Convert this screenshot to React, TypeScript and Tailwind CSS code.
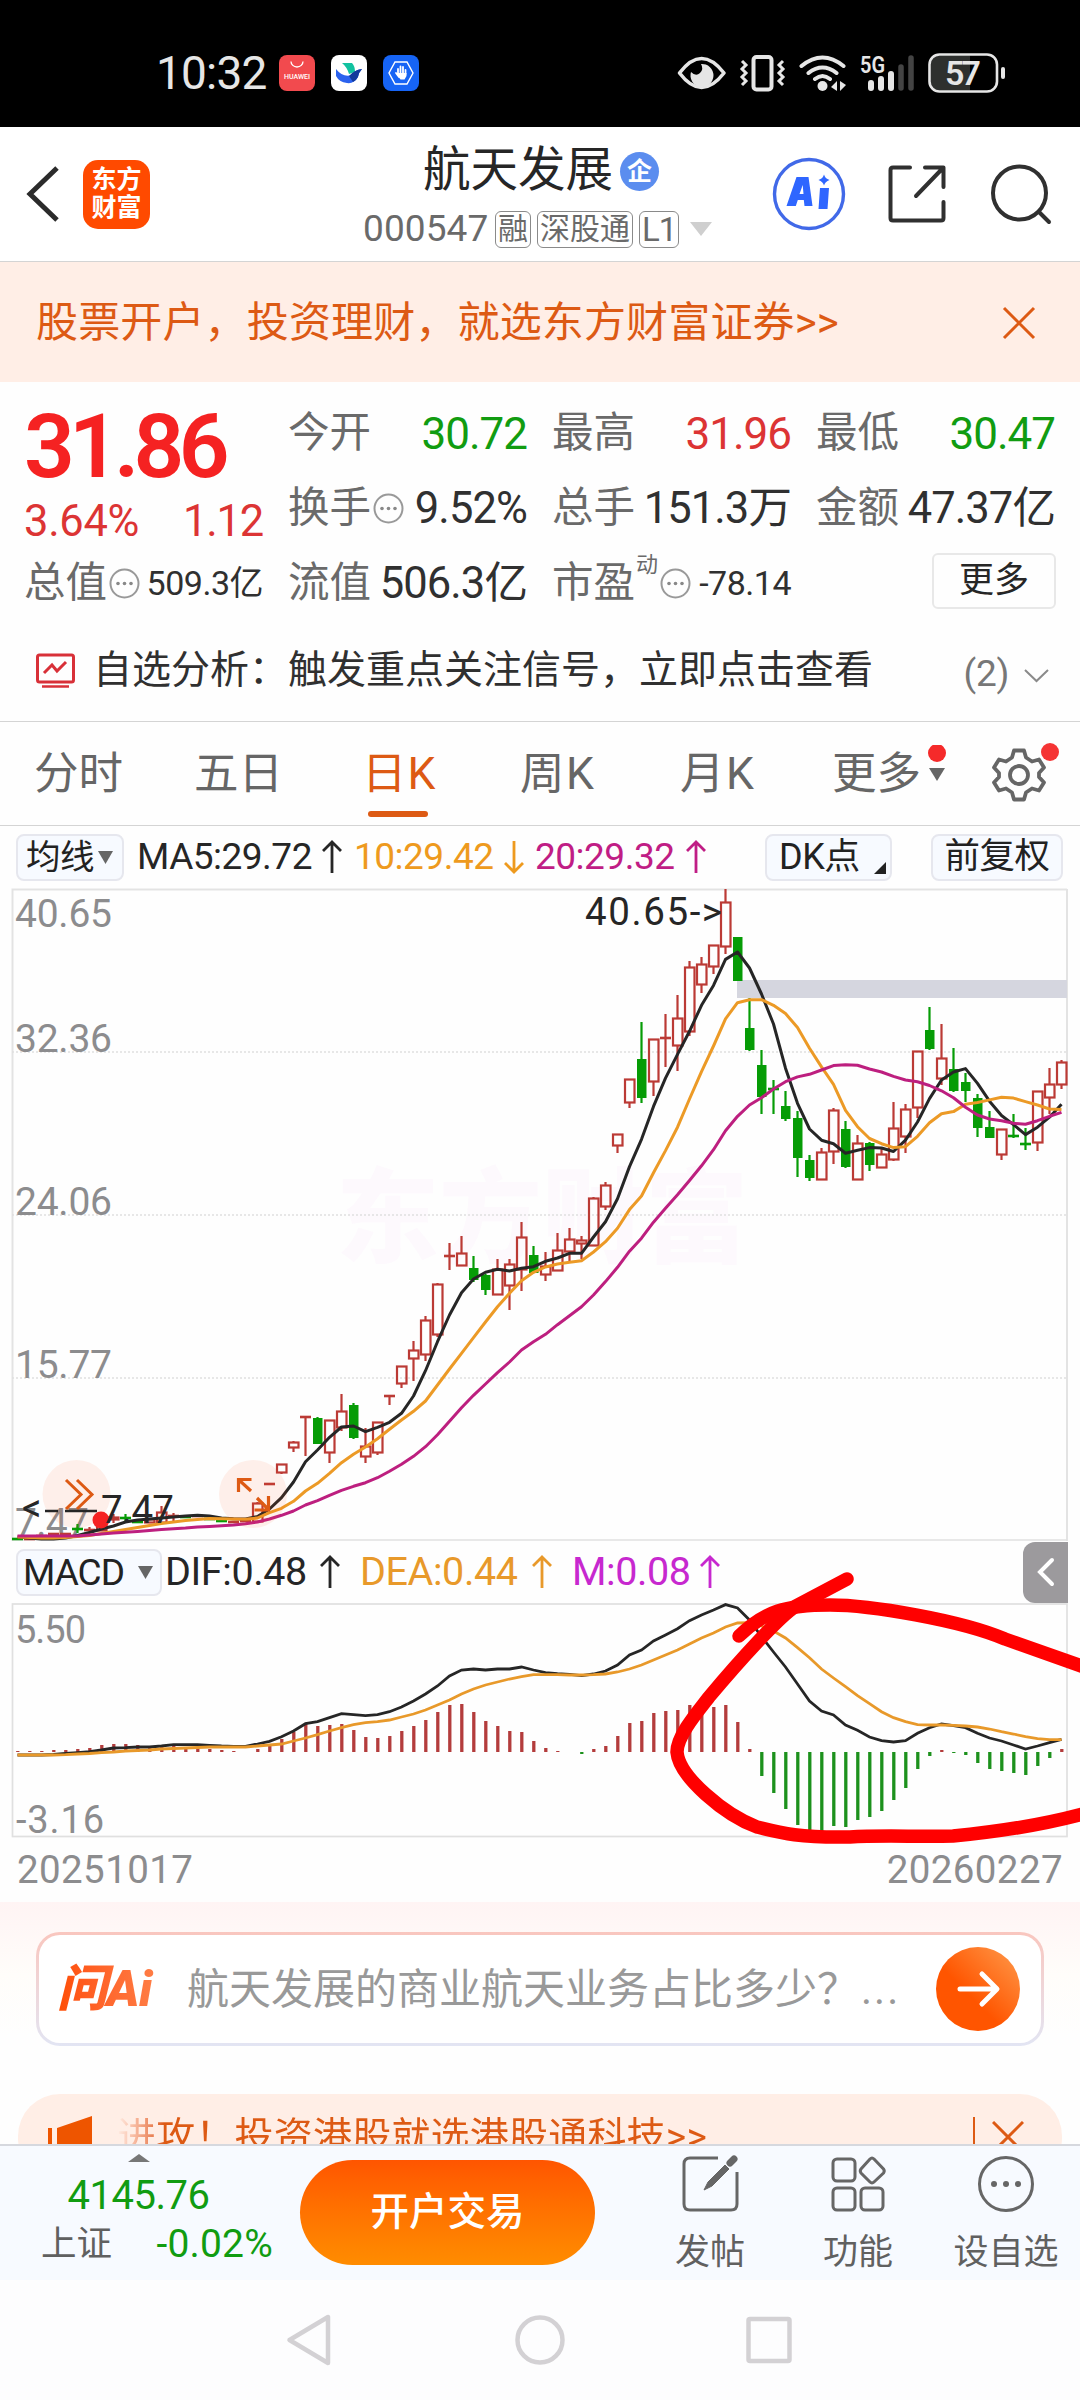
import type { ReactNode } from 'react'

type Candle = [high: number, top: number, bottom: number, low: number, up: boolean]

const R = true
const G = false

const candles: Candle[] = [
  [1539, 1539, 1539, 1539, G],
  [1539, 1539, 1539, 1539, R],
  [1536, 1536, 1536, 1536, R],
  [1534, 1534, 1534, 1534, R],
  [1534, 1534, 1534, 1534, R],
  [1524, 1529, 1529, 1533, G],
  [1527, 1530, 1530, 1532, R],
  [1520, 1522, 1530, 1530, R],
  [1514, 1517, 1519, 1523, R],
  [1514, 1518, 1518, 1522, G],
  [1522, 1522, 1522, 1522, G],
  [1518, 1519, 1522, 1523, R],
  [1506, 1512, 1522, 1523, R],
  [1513, 1516, 1516, 1521, R],
  [1516, 1517, 1517, 1518, G],
  [1516, 1516, 1516, 1516, R],
  [1518, 1519, 1519, 1519, G],
  [1521, 1521, 1521, 1521, G],
  [1522, 1522, 1522, 1522, R],
  [1521, 1521, 1521, 1521, R],
  [1502, 1503, 1521, 1521, R],
  [1484, 1484, 1484, 1484, R],
  [1464, 1464, 1472, 1474, R],
  [1441, 1442, 1447, 1452, R],
  [1417, 1417, 1417, 1456, R],
  [1417, 1418, 1444, 1444, G],
  [1420, 1420, 1452, 1463, R],
  [1394, 1411, 1427, 1431, R],
  [1403, 1405, 1438, 1439, G],
  [1428, 1446, 1456, 1463, R],
  [1422, 1422, 1452, 1455, R],
  [1396, 1396, 1396, 1405, R],
  [1366, 1366, 1383, 1388, R],
  [1341, 1350, 1358, 1381, R],
  [1316, 1320, 1354, 1361, R],
  [1283, 1284, 1334, 1337, R],
  [1243, 1256, 1256, 1270, R],
  [1236, 1253, 1265, 1265, R],
  [1256, 1268, 1280, 1282, G],
  [1274, 1275, 1290, 1295, G],
  [1259, 1269, 1294, 1294, R],
  [1259, 1264, 1285, 1310, R],
  [1222, 1237, 1269, 1291, R],
  [1246, 1255, 1273, 1273, G],
  [1252, 1266, 1274, 1281, R],
  [1233, 1250, 1270, 1270, R],
  [1228, 1239, 1251, 1261, R],
  [1236, 1240, 1243, 1259, R],
  [1197, 1198, 1245, 1245, R],
  [1182, 1185, 1206, 1210, R],
  [1134, 1134, 1145, 1153, R],
  [1079, 1079, 1102, 1108, R],
  [1022, 1059, 1098, 1103, G],
  [1039, 1039, 1081, 1096, R],
  [1014, 1038, 1038, 1067, R],
  [995, 1018, 1045, 1071, R],
  [961, 967, 1031, 1036, R],
  [957, 964, 984, 993, R],
  [945, 945, 966, 974, R],
  [889, 902, 946, 954, R],
  [937, 937, 981, 981, G],
  [998, 1028, 1050, 1051, G],
  [1050, 1065, 1097, 1114, G],
  [1080, 1089, 1089, 1114, G],
  [1091, 1106, 1119, 1121, G],
  [1111, 1118, 1158, 1177, G],
  [1155, 1160, 1178, 1181, G],
  [1148, 1152, 1179, 1179, R],
  [1108, 1110, 1151, 1164, R],
  [1121, 1129, 1167, 1168, G],
  [1135, 1143, 1179, 1179, R],
  [1142, 1143, 1165, 1171, G],
  [1148, 1154, 1167, 1167, R],
  [1102, 1128, 1159, 1161, R],
  [1104, 1109, 1136, 1153, R],
  [1051, 1051, 1107, 1118, R],
  [1007, 1030, 1049, 1050, G],
  [1024, 1058, 1078, 1085, R],
  [1048, 1069, 1091, 1092, G],
  [1073, 1082, 1091, 1102, G],
  [1094, 1098, 1128, 1137, G],
  [1111, 1127, 1138, 1138, G],
  [1129, 1129, 1154, 1160, R],
  [1114, 1136, 1136, 1138, G],
  [1128, 1144, 1144, 1150, G],
  [1091, 1091, 1142, 1151, R],
  [1068, 1084, 1097, 1114, R],
  [1060, 1062, 1084, 1089, R],
]

const ma5 = [
  1537, 1538, 1539, 1539, 1538, 1535.5, 1532.5, 1529, 1526, 1522, 1520, 1519, 1518, 1517, 1516,
  1515.3, 1516, 1518, 1518.7, 1519, 1516.5, 1509, 1497.7, 1482, 1461.7, 1450, 1437.3, 1427, 1426,
  1431.7, 1427.3, 1422.3, 1413.3, 1396, 1370.7, 1341.7, 1315, 1292.7, 1279, 1272.3, 1269.3, 1271,
  1268.3, 1266.7, 1261.3, 1258, 1253.3, 1253.3, 1237, 1221.7, 1198.7, 1166.6, 1139.3, 1106.4,
  1078.2, 1054.3, 1031.3, 1005.3, 985.4, 959.4, 952, 968, 994, 1024, 1068.2, 1103.3, 1129, 1140.2,
  1143.7, 1153.2, 1150.2, 1147.6, 1148, 1151.5, 1140.2, 1122, 1098.6, 1080, 1072, 1068.6, 1083.4,
  1101.2, 1115.5, 1124.6, 1134.6, 1127.2, 1117.2, 1104.2,
]

const ma10 = [
  1537, 1537.5, 1538, 1538, 1537.5, 1536.5, 1535.5, 1533.5, 1531.5, 1529.5, 1527.5, 1525.5, 1523.5,
  1522, 1520.5, 1519.5, 1518.5, 1518.7, 1519, 1519.3, 1518, 1512.7, 1508.3, 1501.3, 1491, 1483.3,
  1473.3, 1462.7, 1454.3, 1447, 1438.7, 1429.3, 1420, 1411.3, 1401, 1385, 1369, 1353.3, 1337.7,
  1322, 1306.7, 1293.3, 1280.7, 1272.3, 1267, 1264, 1262.3, 1260.7, 1252, 1241.7, 1228.2, 1209.6,
  1196, 1172.7, 1150.6, 1127.2, 1099, 1071.7, 1046, 1018.8, 1002.7, 999.7, 999.7, 1005.3, 1013.6,
  1027.4, 1048.3, 1066.9, 1084.3, 1110.3, 1126.7, 1138.5, 1143.7, 1147.6, 1146.7, 1136.3, 1122.8,
  1113.7, 1111.6, 1104.2, 1102.5, 1099.9, 1097.3, 1098.1, 1101.6, 1105, 1109, 1109.4,
]

const ma20 = [
  1536, 1536, 1536, 1536, 1536, 1536, 1535, 1534, 1533, 1532.2, 1531.4, 1530.4, 1529.5, 1528.7, 1528,
  1527, 1526.4, 1525.7, 1525, 1523.8, 1522, 1519, 1515.3, 1511, 1505, 1500.7, 1495.3, 1490.3,
  1486.3, 1482.7, 1477.7, 1471.3, 1464.3, 1456.3, 1446.7, 1434.7, 1421.3, 1407.7, 1395.3, 1384,
  1372.7, 1362, 1350, 1341.7, 1334.3, 1324.7, 1315.7, 1306.7, 1295, 1281.6, 1267.3, 1251.2, 1238.2,
  1222.2, 1208.3, 1194.8, 1180.5, 1165.8, 1149.7, 1130.7, 1116.3, 1105, 1097.7, 1089, 1081.7,
  1076.9, 1074.3, 1070, 1065.6, 1064.7, 1065.2, 1069, 1072, 1076.4, 1080, 1081.7, 1085.5, 1090.8,
  1097.7, 1107.2, 1115, 1119, 1120.7, 1123.3, 1124.2, 1120.7, 1116.3, 1112.4,
]

const bars = [
  1, 1, 1, 2, 2, 3, 4, 7, 8, 8, 7, 6, 6, 6, 5, 4, 3, 2, 1, 0, 3, 7, 13, 20, 28, 26, 27, 28, 22, 15,
  14, 16, 21, 26, 32, 40, 47, 48, 40, 31, 26, 21, 20, 11, 4, 1, 0, -2, 3, 6, 16, 29, 31, 39, 41, 42,
  47, 46, 45, 47, 30, 3, -24, -41, -57, -73, -78, -79, -74, -75, -68, -65, -59, -48, -36, -17, -4, 2,
  -1, -3, -11, -17, -19, -21, -23, -14, -6, 3,
]

const dif = [
  1755, 1755, 1755, 1754.5, 1753.5, 1752.7, 1751.7, 1750, 1748, 1747.7, 1747, 1747, 1746, 1744.7,
  1744.7, 1744.7, 1745.3, 1746, 1746.3, 1746.3, 1744, 1741.3, 1736.7, 1731, 1723.7, 1721.7, 1717.7,
  1713.7, 1714.7, 1715.7, 1714.7, 1711.7, 1707, 1701, 1694, 1686, 1676, 1670, 1669, 1670, 1669, 1669,
  1667, 1670, 1672.7, 1673.7, 1674.3, 1675.7, 1674, 1671, 1665, 1655, 1650, 1641, 1635, 1628.7,
  1620.7, 1615, 1610, 1604.6, 1608, 1620, 1636.7, 1652, 1667, 1684, 1701, 1711, 1715, 1725, 1730.3,
  1737, 1740.7, 1742, 1740.7, 1733.3, 1727.7, 1724, 1725.7, 1727.7, 1733.3, 1738, 1741, 1745, 1749,
  1746, 1742.7, 1739.3,
]

const dea = [
  1755, 1755, 1755, 1755, 1754.7, 1754, 1753.5, 1752.7, 1752, 1751, 1750.5, 1750, 1749, 1748.5, 1748,
  1747.5, 1747, 1747, 1747, 1747, 1746, 1745, 1744, 1741, 1738, 1734.7, 1731, 1727.7, 1724.7, 1722.7,
  1721.7, 1720, 1717, 1714, 1710, 1705, 1700, 1694, 1689, 1685, 1682, 1679, 1676.7, 1674.7, 1674.7,
  1674.7, 1675, 1675, 1674.7, 1674, 1672, 1669, 1665, 1660, 1655, 1650, 1644, 1638, 1633, 1627, 1623,
  1622.7, 1626, 1631, 1638, 1647.7, 1657.7, 1669, 1678, 1686.7, 1695.7, 1703.7, 1711.7, 1717.7,
  1721.7, 1724.7, 1725, 1725, 1725.3, 1726, 1727, 1729, 1731.7, 1734, 1736.7, 1738.7, 1739.7, 1739.7,
]

const xAt = (i: number) => 17.5 + i * 12
const toPoints = (ys: number[]) => ys.map((y, i) => `${xAt(i)},${y}`).join(' ')

function StatusBar() {
  return (
    <div className="flex h-[127px] items-center bg-black pl-[156px] pr-[74px] pt-[19px] text-[#e6e6e6]">
      <span className="w-[123px] text-[46px] tracking-[-0.800px]">10:32</span>
      <div className="flex flex-1 gap-4">
        <svg width="36" height="36" viewBox="0 0 36 36">
          <rect width="36" height="36" rx="8" fill="#f24a4e" />
          <path d="M12 6.500a6 5.500 0 0 0 12 0" fill="none" stroke="#fff" strokeWidth="1.300" />
          <text x="18" y="24" fontSize="7" fontWeight="500" textAnchor="middle" fill="#fff">HUAWEI</text>
        </svg>
        <svg width="36" height="36" viewBox="0 0 36 36">
          <rect width="36" height="36" rx="8" fill="#fff" />
          <path d="M11 8h10q3 3 3 9l-6 2q-2-7-7-11z" fill="#12c2a0" />
          <path d="M5 14q7 9 16 6 4-6 10-6-3 3-4 8-4 7-11 6-8-1-11-7z" fill="#2b62ee" />
          <path d="M18 21q5-6 13-7-3 3-4 8-2 4-5 5z" fill="#123a9c" />
        </svg>
        <svg width="36" height="36" viewBox="0 0 36 36" fill="none" stroke="#fff">
          <rect width="36" height="36" rx="8" fill="#1664f5" stroke="none" />
          <path d="M12 7h12l6 11-6 11H12L6 18z" strokeWidth="1.400" />
          <path d="M15 19v-5M17.500 18v-6.500M20 18v-6M22.500 19v-4M13 18l3 4" strokeWidth="1.800" strokeLinecap="round" />
          <path d="M14.500 18h9v3l-2 3.500h-4l-3-4z" fill="#fff" stroke="none" />
        </svg>
      </div>
      <svg width="330" height="42" viewBox="676 52 330 42" fill="none" stroke="#e6e6e6">
        <path d="M679.500 73q22-29 44.500 0-22.500 29-44.500 0z" strokeWidth="3.600" strokeLinejoin="round" />
        <path d="M701 64a11.500 11.500 0 1 1-10 8q5 5 9 1t1-9z" fill="#e6e6e6" stroke="none" />
        <rect x="753.500" y="57" width="18" height="32.500" rx="3" strokeWidth="4" />
        <path d="M742 61l4 4-4 4 4 4-4 4 4 4-4 4M783 61l-4 4 4 4-4 4 4 4-4 4 4 4" strokeWidth="3" />
        <path d="M801.500 66q21-17 42 0M808.500 73q14-11 28 0M815 79q7.500-6 15 0" strokeWidth="4" strokeLinecap="round" />
        <circle cx="822.500" cy="86" r="5" fill="#e6e6e6" stroke="none" />
        <path d="M837 81v10l-6-4zM840 81l6 4-6 6z" fill="#e6e6e6" stroke="none" />
        <text x="860" y="73" fontSize="24" fontWeight="600" fill="#e6e6e6" stroke="none" textLength="25" lengthAdjust="spacingAndGlyphs">5G</text>
        <path d="M871 83v5M881 79v9M891 74v14" strokeWidth="6" strokeLinecap="round" />
        <path d="M901 67v21M911 58v30" stroke="#444" strokeWidth="5.500" strokeLinecap="round" />
        <path d="M939 55.500h31v35h-31q-8 0-8-8v-19q0-8 8-8z" fill="#2e302e" stroke="none" />
        <rect x="929.500" y="54.500" width="67.500" height="37" rx="10" strokeWidth="2.600" />
        <path d="M1003 69v8" strokeWidth="4" strokeLinecap="round" />
        <text x="963" y="84.500" fontSize="34" fontWeight="600" textAnchor="middle" fill="#e6e6e6" stroke="none" textLength="36">57</text>
      </svg>
    </div>
  )
}

function Tag({ children }: { children: ReactNode }) {
  return (
    <span className="flex h-[37px] items-center rounded-[6px] border border-[#8a8a8a] px-[2px] text-[30px] leading-none text-[#6a6a6a]">
      {children}
    </span>
  )
}

function Header() {
  return (
    <header className="flex h-[135px] items-center border-b border-[#d4d4d4] bg-white pl-[26px] pr-[27px]">
      <svg width="34" height="58" viewBox="0 0 34 58" fill="none" stroke="#2b2b2b" strokeWidth="5">
        <path d="M31 3L4 29l27 26" />
      </svg>
      <div className="ml-[23px] flex h-[69px] w-[67px] flex-col items-center justify-center rounded-[15px] bg-[#ff4a00] text-[25px] font-bold leading-[28px] text-white">
        <span>东方</span>
        <span>财富</span>
      </div>
      <div className="ml-[213px] w-[354px]">
        <div className="flex h-[60px] items-center pl-[60px] pt-[12px]">
          <span className="text-[47.500px] leading-none text-[#262626]">航天发展</span>
          <span className="ml-[7px] flex size-[39px] items-center justify-center rounded-full bg-[#5b8def] text-[25px] font-bold leading-none text-white">
            企
          </span>
        </div>
        <div className="flex h-[58px] items-center gap-[6px] pt-[10px]">
          <span className="w-[126px] text-[37px] tracking-[0.100px] text-[#6a6a6a]">000547</span>
          <Tag>融</Tag>
          <Tag>深股通</Tag>
          <Tag>
            <span className="w-[34px] text-center text-[33px] tracking-[-1px]">L1</span>
          </Tag>
          <svg className="ml-[4px]" width="24" height="16" viewBox="0 0 24 16">
            <path d="M1 1h22L12 15z" fill="#cfcfcf" />
          </svg>
        </div>
      </div>
      <svg className="ml-[55px]" width="74" height="74" viewBox="0 0 74 74">
        <circle cx="37" cy="37" r="34.500" fill="none" stroke="#4169e8" strokeWidth="3.400" />
        <path fillRule="evenodd" d="M14.500 49l10-29h12l4 29h-8l-.7-6h-6l-2 6zM27.500 37h4l-.8-9z" fill="#2f66ff" />
        <path d="M48 31h9l-1.500 21h-9zM52 17.500q1 4 5.500 5.500-4.500 1.500-5.500 5.500-1-4-5.500-5.500 4.500-1.500 5.500-5.500z" fill="#2f66ff" />
      </svg>
      <svg className="ml-[40px]" width="62" height="62" viewBox="0 0 62 62" fill="none" stroke="#303030" strokeWidth="4" strokeLinecap="round" strokeLinejoin="round">
        <path d="M24 4.500H7q-2.500 0-2.500 2.500v48q0 2.500 2.500 2.500h48q2.500 0 2.500-2.500V39" />
        <path d="M39 4.500h18.500V24M56 6L30 33" />
      </svg>
      <svg className="ml-[42px]" width="62" height="62" viewBox="0 0 62 62" fill="none" stroke="#303030" strokeWidth="4" strokeLinecap="round">
        <circle cx="29.500" cy="30" r="26.500" />
        <path d="M49 49l10 10" />
      </svg>
    </header>
  )
}

function Banner() {
  return (
    <div className="flex h-[120px] items-center justify-between bg-[#ffeee6] pl-[36px] pr-[44px] pt-[1px] text-[#dd5a14]">
      <span className="text-[42px] tracking-[0.150px]">股票开户，投资理财，就选东方财富证券&gt;&gt;</span>
      <svg width="34" height="34" viewBox="0 0 34 34" stroke="currentColor" strokeWidth="3">
        <path d="M2 2l30 30M32 2L2 32" />
      </svg>
    </div>
  )
}

function Dots({ className = '' }: { className?: string }) {
  return (
    <svg className={className} width="31" height="31" viewBox="0 0 31 31">
      <circle cx="15.500" cy="15.500" r="14" fill="none" stroke="#999" strokeWidth="2" />
      <circle cx="9" cy="15.500" r="1.800" fill="#888" />
      <circle cx="15.500" cy="15.500" r="1.800" fill="#888" />
      <circle cx="22" cy="15.500" r="1.800" fill="#888" />
    </svg>
  )
}

interface CellProps {
  label: string
  value: string
  tone?: string
  info?: boolean
  sup?: string
}

function Cell({ label, value, tone = 'text-[#303030] text-[43.500px] tracking-[-0.900px]', info, sup }: CellProps) {
  return (
    <div className="flex h-[75px] items-center whitespace-nowrap">
      <span className="text-[41.500px] text-[#6a6a6a]">{label}</span>
      {sup && <span className="-mt-[38px] ml-[1px] text-[22px] text-[#6a6a6a]">{sup}</span>}
      {info && <Dots className="ml-[2px]" />}
      <span className={`ml-auto ${tone}`}>{value}</span>
    </div>
  )
}

function Quotes() {
  const green = 'text-[#119c11] text-[44px] tracking-[-1px]'
  const red = 'text-[#dc3434] text-[44px] tracking-[-1px]'
  const small = 'text-[#303030] text-[34px] tracking-[-0.500px]'
  return (
    <section className="h-[340px] border-b border-[#d4d4d4] bg-[#fefefe] pt-[14px]">
      <div className="grid h-[225px] grid-cols-[239px_239px_239px_239px] gap-x-[25px] pl-[24px]">
        <div>
          <div className="flex h-[101px] items-center text-[89px] font-semibold tracking-[-5.800px] text-[#f52222]">
            31.86
          </div>
          <div className="flex h-[49px] items-center justify-between text-[43.500px] tracking-[-0.300px] text-[#dc3434]">
            <span>3.64%</span>
            <span className="tracking-[-1.200px]">1.12</span>
          </div>
          <Cell label="总值" value="509.3亿" tone={small} info />
        </div>
        <div>
          <Cell label="今开" value="30.72" tone={green} />
          <Cell label="换手" value="9.52%" info />
          <Cell label="流值" value="506.3亿" />
        </div>
        <div>
          <Cell label="最高" value="31.96" tone={red} />
          <Cell label="总手" value="151.3万" />
          <Cell label="市盈" value="-78.14" tone={small} sup="动" info />
        </div>
        <div>
          <Cell label="最低" value="30.47" tone={green} />
          <Cell label="金额" value="47.37亿" />
          <div className="ml-auto mt-[7px] flex h-[56px] w-[124px] translate-x-px items-center justify-center rounded-[6px] border-2 border-[#e8e8e8] text-[35px] text-[#262626]">
            更多
          </div>
        </div>
      </div>
      <div className="flex h-[96px] items-center pl-[35px] pr-[30px] pt-[3px]">
        <svg width="41" height="38" viewBox="0 0 41 38" fill="none" stroke="#d83038" strokeWidth="3">
          <rect x="2.500" y="3" width="36" height="27" rx="2" />
          <path d="M9 21l8-8 5 6 9-9" />
          <path d="M7 34.500h27" strokeWidth="2.500" />
        </svg>
        <span className="ml-[17px] text-[39px] text-[#303030]">自选分析：触发重点关注信号，立即点击查看</span>
        <span className="ml-auto pt-[7px] text-[37px] tracking-[-0.300px] text-[#777]">(2)</span>
        <svg className="ml-[14px] mt-[9px]" width="27" height="15" viewBox="0 0 27 15" fill="none" stroke="#8a8a8a" strokeWidth="2">
          <path d="M2 2l11.500 11L25 2" />
        </svg>
      </div>
    </section>
  )
}

function Tabs() {
  const item = 'text-[44.500px] leading-none text-[#666]'
  return (
    <nav className="flex h-[104px] items-center border-b border-[#d4d4d4] bg-[#fefefe] pl-[34px] pt-[2px]">
      <span className={`${item} w-[160px]`}>分时</span>
      <span className={`${item} w-[168px]`}>五日</span>
      <span className="relative flex h-full w-[158px] items-center text-[44.500px] leading-none tracking-[1px] text-[#dd5a14]">
        日K
        <i className="absolute bottom-[8px] left-[6px] h-[6px] w-[60px] rounded-full bg-[#dd5a14]" />
      </span>
      <span className={`${item} w-[160px] tracking-[1.500px]`}>周K</span>
      <span className={`${item} w-[152px] tracking-[1.500px]`}>月K</span>
      <span className={item}>更多</span>
      <svg className="ml-[4px]" width="24" height="60" viewBox="0 0 24 60">
        <circle cx="12" cy="8" r="9" fill="#f52a2a" />
        <path d="M4 23h16l-8 13z" fill="#666" />
      </svg>
      <svg className="ml-[37px]" width="74" height="70" viewBox="986 740 74 70">
        <path
          d="M1014 750.500h10l2 7 6 4 7-2 5 8-5 5.500v4l5 5.500-5 8-7-2-6 4-2 7h-10l-2-7-6-4-7 2-5-8 5-5.500v-4l-5-5.500 5-8 7 2 6-4z"
          fill="none"
          stroke="#666"
          strokeWidth="3.800"
          strokeLinejoin="round"
        />
        <circle cx="1019" cy="775" r="9" fill="none" stroke="#666" strokeWidth="3.800" />
        <circle cx="1050" cy="752" r="9" fill="#f53434" />
      </svg>
    </nav>
  )
}

function Arrow({ down = false, className = '' }: { down?: boolean; className?: string }) {
  return (
    <svg className={className} width="22" height="34" viewBox="0 0 22 34" fill="none" stroke="currentColor" strokeWidth="2.800">
      <path d={down ? 'M11 1v31M2 23l9 9 9-9' : 'M11 33V2M2 11l9-9 9 9'} />
    </svg>
  )
}

const pill = 'flex items-center rounded-[8px] border-2 border-[#e6e7ee] bg-[#f7faff] text-[#222] leading-none'

function MaRow() {
  return (
    <div className="flex h-[62px] items-center bg-[#fefefe] pl-[16px] text-[37px] tracking-[-0.500px]">
      <div className={`${pill} h-[47px] w-[108px] pl-[8px] text-[34.500px]`}>
        均线
        <svg className="ml-[4px]" width="15" height="13" viewBox="0 0 15 13">
          <path d="M0 0h15L7.500 13z" fill="#666" />
        </svg>
      </div>
      <span className="ml-[13px] w-[184px] text-[#262626]">MA5:29.72</span>
      <Arrow className="text-[#262626]" />
      <span className="ml-[11px] w-[149px] text-[#ee9a1e]">10:29.42</span>
      <Arrow down className="text-[#ee9a1e]" />
      <span className="ml-[10px] w-[150px] text-[#c01d85]">20:29.32</span>
      <Arrow className="text-[#c01d85]" />
      <div className={`${pill} ml-[58px] h-[47px] w-[127px] pl-[12px] text-[36px]`}>
        DK点
        <svg className="ml-auto mr-[4px] mt-[22px]" width="12" height="12" viewBox="0 0 12 12">
          <path d="M12 0v12H0z" fill="#222" />
        </svg>
      </div>
      <div className={`${pill} ml-[39px] h-[47px] w-[132px] justify-center text-[35.500px]`}>前复权</div>
    </div>
  )
}

function CandleShape({ c, i }: { c: Candle; i: number }) {
  const [high, top, bottom, low, up] = c
  const x = xAt(i)
  const color = up ? '#bb3a35' : '#069c06'
  if (bottom - top < 1) {
    return (
      <g stroke={color} strokeWidth="2.200">
        <path d={`M${x} ${high}V${low}`} />
        <path d={`M${x - 5.5} ${top}h11`} strokeWidth="2.600" />
      </g>
    )
  }
  return (
    <g stroke={color} strokeWidth="2.200">
      <path d={`M${x} ${high}V${top}M${x} ${bottom}V${low}`} />
      {up ? (
        <rect x={x - 4.5} y={top + 0.5} width="9.500" height={bottom - top} fill="none" />
      ) : (
        <rect x={x - 4.5} y={top} width="9.500" height={bottom - top} fill={color} stroke="none" />
      )}
    </g>
  )
}

function KLine() {
  return (
    <svg className="block" width="1080" height="653" viewBox="0 888 1080 653">
      <text x="336" y="1255" fontSize="103" fontWeight="900" fill="#fdf9fd">东方财富</text>
      <path d="M12.500 1541V889.500H1067" fill="none" stroke="#e3e3e3" strokeWidth="2" />
      <path d="M1067 889v652" stroke="#e3e3e3" strokeWidth="2" />
      <path d="M12 1540H1067" stroke="#e0e0e0" strokeWidth="1.500" />
      <path d="M12 1052H1067M12 1215H1067M12 1378H1067" stroke="#e0e0e0" strokeWidth="1.500" strokeDasharray="2 2" />
      <rect x="737" y="980" width="330" height="18" fill="#d5d6df" />
      <g fontSize="39" fill="#8c8c8e">
        <text x="15" y="927" textLength="97">40.65</text>
        <text x="15" y="1052" textLength="97">32.36</text>
        <text x="15" y="1215" textLength="97">24.06</text>
        <text x="15" y="1378" textLength="97">15.77</text>
        <text x="15" y="1536" textLength="74">7.47</text>
      </g>
      {candles.map((c, i) => (
        <CandleShape key={i} c={c} i={i} />
      ))}
      <g fill="none" strokeWidth="3" strokeLinejoin="round">
        <polyline points={toPoints(ma5)} stroke="#262626" />
        <polyline points={toPoints(ma10)} stroke="#ec9a26" />
        <polyline points={toPoints(ma20)} stroke="#bd1f7f" />
      </g>
      <text x="585" y="925" fontSize="38.500" fill="#262626" textLength="137">40.65-&gt;</text>
      <circle cx="76.500" cy="1494" r="34" fill="#ff5a1e" fillOpacity="0.090" />
      <circle cx="253" cy="1494" r="34" fill="#ff5a1e" fillOpacity="0.090" />
      <path d="M66 1480l15 14.500-15 14.500M77 1480l15 14.500-15 14.500" fill="none" stroke="#dd5a14" strokeWidth="3" />
      <path d="M238.500 1492v-12.500h13M239 1480l12 11M268.500 1496v14h-14M257 1498l11 11" fill="none" stroke="#dd5a14" strokeWidth="3.200" />
      <g fontSize="38.500" fill="#262626">
        <text x="22" y="1521">&lt;</text>
        <path d="M45 1511h13M65 1511h32" stroke="#262626" strokeWidth="2.500" />
        <circle cx="101" cy="1520" r="8.500" fill="#f52222" />
        <text x="101" y="1523" textLength="73">7.47</text>
      </g>
    </svg>
  )
}

function MacdRow() {
  return (
    <div className="flex h-[62px] items-center bg-[#fefefe] pl-[16px] pr-[12px] text-[39.500px] tracking-[-0.400px]">
      <div className={`${pill} h-[47px] w-[146px] pl-[5px] text-[37px] tracking-[-1px]`}>
        MACD
        <svg className="ml-auto mr-[7px]" width="15" height="13" viewBox="0 0 15 13">
          <path d="M0 0h15L7.500 13z" fill="#666" />
        </svg>
      </div>
      <span className="ml-[3px] w-[154px] text-[#262626]">DIF:0.48</span>
      <Arrow className="text-[#262626]" />
      <span className="ml-[19px] w-[171px] text-[#e8992a]">DEA:0.44</span>
      <Arrow className="text-[#e8992a]" />
      <span className="ml-[19px] w-[127px] text-[#c728cf]">M:0.08</span>
      <Arrow className="text-[#c728cf]" />
      <div className="ml-auto flex h-[61px] w-[45px] items-center justify-center rounded-l-[12px] bg-[#9c9a9d]">
        <svg width="18" height="30" viewBox="0 0 18 30" fill="none" stroke="#fff" strokeWidth="4" strokeLinecap="round">
          <path d="M15 3L3 15l12 12" />
        </svg>
      </div>
    </div>
  )
}

function Macd() {
  return (
    <div className="relative bg-[#fefefe]">
      <MacdRow />
      <svg className="block" width="1080" height="235" viewBox="0 1603 1080 235">
        <rect x="12.500" y="1604" width="1054.500" height="232.500" fill="none" stroke="#e0e0e0" strokeWidth="1.700" />
        <g fontSize="38" fill="#8c8c8e">
          <text x="15" y="1643" textLength="71">5.50</text>
          <text x="16" y="1833" textLength="88">-3.16</text>
        </g>
        {bars.map((v, i) => (
          <path key={i} d={`M${xAt(i) + 0.3} 1752v${-v}`} stroke={v > 0 ? '#b33c3c' : '#1c911c'} strokeWidth="3.300" />
        ))}
        <polyline points={toPoints(dif)} fill="none" stroke="#262626" strokeWidth="2.800" />
        <polyline points={toPoints(dea)} fill="none" stroke="#e8992a" strokeWidth="2.800" />
      </svg>
      <div className="flex h-[64px] items-start justify-between pl-[17px] pr-[17px] pt-[9px] text-[38.500px] leading-[46px] tracking-[0.400px] text-[#8c8c8e]">
        <span>20251017</span>
        <span>20260227</span>
      </div>
      {/* marker stroke over the indicator */}
      <svg className="pointer-events-none absolute left-0 top-0" width="1080" height="361" viewBox="0 1541 1080 361" fill="none" stroke="#f00" strokeWidth="13.500" strokeLinecap="round" strokeLinejoin="round">
        <path d="M847 1579L796 1606C780 1616 740 1660 709 1697C700 1709 677 1735 677 1752C679 1777 725 1815 757 1827C781 1833 800 1838 850 1837C880 1835 920 1837 953 1836C985 1833 1040 1826 1090 1812" />
        <path d="M739 1636C765 1611 785 1605 830 1605C870 1605 960 1620 1005 1639L1090 1669" />
      </svg>
    </div>
  )
}

function AskAi() {
  return (
    <div className="h-[242px] overflow-hidden bg-gradient-to-b from-[#fff4f4] from-0% via-[#fffdfa] via-30% to-[#fefefe] to-55%">
      <div className="mx-[36px] mt-[30px] h-[114px] rounded-[24px] bg-gradient-to-b from-[#f9c6be] to-[#e2e5f3] p-[3px]">
        <div className="flex h-full items-center rounded-[21px] bg-white pl-[18px] pr-[21px]">
          <span className="w-[130px] whitespace-nowrap bg-gradient-to-r from-[#ff4d00] to-[#ff8a52] bg-clip-text text-[50px] font-black italic leading-[60px] tracking-[-0.500px] text-transparent">
            问Ai
          </span>
          <span className="text-[42px] text-[#999]">航天发展的商业航天业务占比多少？</span>
          <span className="ml-[2px] text-[42px] tracking-[2px] text-[#999]">...</span>
          <svg className="ml-auto" width="84" height="84" viewBox="0 0 84 84">
            <defs>
              <linearGradient id="go" x1="0.200" y1="0.800" x2="0.900" y2="0.100">
                <stop offset="0.300" stopColor="#ff5500" />
                <stop offset="1" stopColor="#ff9040" />
              </linearGradient>
            </defs>
            <circle cx="42" cy="42" r="42" fill="url(#go)" />
            <path d="M24 42h36M46 27l15 15-15 15" fill="none" stroke="#fff" strokeWidth="5" strokeLinecap="round" strokeLinejoin="round" />
          </svg>
        </div>
      </div>
      <div className="mx-[18px] mt-[48px] flex h-[86px] items-center rounded-[42px] bg-[#ffeee6] pl-[30px] pr-[38px] text-[#dd5a14]">
        <svg width="46" height="44" viewBox="0 0 46 44" fill="#ee5500">
          <path d="M0 13h4v20H0zM9 13L44 1v42L9 32z" />
        </svg>
        <span className="ml-[23px] bg-gradient-to-r from-[#ffeee6] from-0% to-[#dd5a14] to-8% bg-clip-text text-[39px] tracking-[0.200px] text-transparent">
          进攻！投资港股就选港股通科技&gt;&gt;
        </span>
        <i className="ml-auto h-[40px] w-[2px] bg-[#dd5a14]" />
        <svg className="ml-[17px]" width="32" height="32" viewBox="0 0 32 32" stroke="currentColor" strokeWidth="3">
          <path d="M1 1l30 30M31 1L1 31" />
        </svg>
      </div>
    </div>
  )
}

function Action({ label, className, children }: { label: string; className: string; children: ReactNode }) {
  return (
    <div className={`flex flex-col items-center ${className}`}>
      <svg width="60" height="60" viewBox="0 0 60 60" fill="none" stroke="#666" strokeWidth="3">
        {children}
      </svg>
      <span className="mt-[20px] text-[35px] leading-[38px] text-[#606060]">{label}</span>
    </div>
  )
}

function BottomBar() {
  return (
    <div className="flex h-[136px] border-t-2 border-[#d6d8de] bg-[#f7faff]">
      <div className="w-[300px]">
        <div className="flex h-[76px] flex-col items-center pr-[23px] pt-[8px]">
          <svg width="22" height="8" viewBox="0 0 22 8">
            <path d="M0 8L11 0l11 8z" fill="#777" />
          </svg>
          <span className="mt-[9px] text-[40px] leading-[50px] tracking-[-0.500px] text-[#119c11]">4145.76</span>
        </div>
        <div className="flex items-center justify-between pl-[41px] pr-[27px] leading-[44px]">
          <span className="text-[35.500px] text-[#606060]">上证</span>
          <span className="text-[39px] tracking-[0.200px] text-[#119c11]">-0.02%</span>
        </div>
      </div>
      <div className="mt-[14px] flex h-[105px] w-[295px] items-center justify-center rounded-full bg-gradient-to-b from-[#ff5500] to-[#ff8c00] pb-px text-[38.500px] font-medium text-white">
        开户交易
      </div>
      <Action label="发帖" className="ml-[60px] w-[110px] pt-[8px]">
        <path d="M38 4H10q-6 0-6 6v40q0 6 6 6h41q6 0 6-6V18" />
        <path d="M24 36l4-8 17-17 4 4-17 17z" fill="#666" strokeWidth="1" />
        <path d="M50 9l4-4" strokeWidth="7" strokeLinecap="round" />
      </Action>
      <Action label="功能" className="ml-[38px] w-[110px] pt-[8px]">
        <rect x="5" y="5" width="22" height="22" rx="4" />
        <rect x="5" y="34" width="22" height="22" rx="4" />
        <rect x="33" y="34" width="22" height="22" rx="4" />
        <path d="M42 5q2-2 4 0l9.500 10q1.500 2 0 4L46 28q-2 2-4 0l-9-9q-1.500-2 0-4z" />
      </Action>
      <Action label="设自选" className="ml-[38px] w-[110px] pt-[8px]">
        <circle cx="30" cy="30" r="26.500" />
        <path d="M18 30h.01M30 30h.01M42 30h.01" strokeWidth="6" strokeLinecap="round" />
      </Action>
    </div>
  )
}

function SystemNav() {
  return (
    <div className="flex h-[120px] items-center justify-center bg-[#fdfdfe]">
      <svg width="508" height="56" viewBox="286 2312 508 56" fill="none" stroke="#d3d1d4" strokeWidth="4.500" strokeLinejoin="round">
        <path d="M328 2317v46L289.500 2340z" />
        <circle cx="540" cy="2340" r="22.500" />
        <rect x="748.500" y="2319" width="41" height="42" rx="1.500" />
      </svg>
    </div>
  )
}

export default function App() {
  return (
    <div className="h-[2400px] w-[1080px] overflow-hidden bg-[#fefefe] font-['Roboto','Noto_Sans_CJK_SC',sans-serif]">
      <StatusBar />
      <Header />
      <Banner />
      <Quotes />
      <Tabs />
      <MaRow />
      <KLine />
      <Macd />
      <AskAi />
      <BottomBar />
      <SystemNav />
    </div>
  )
}
